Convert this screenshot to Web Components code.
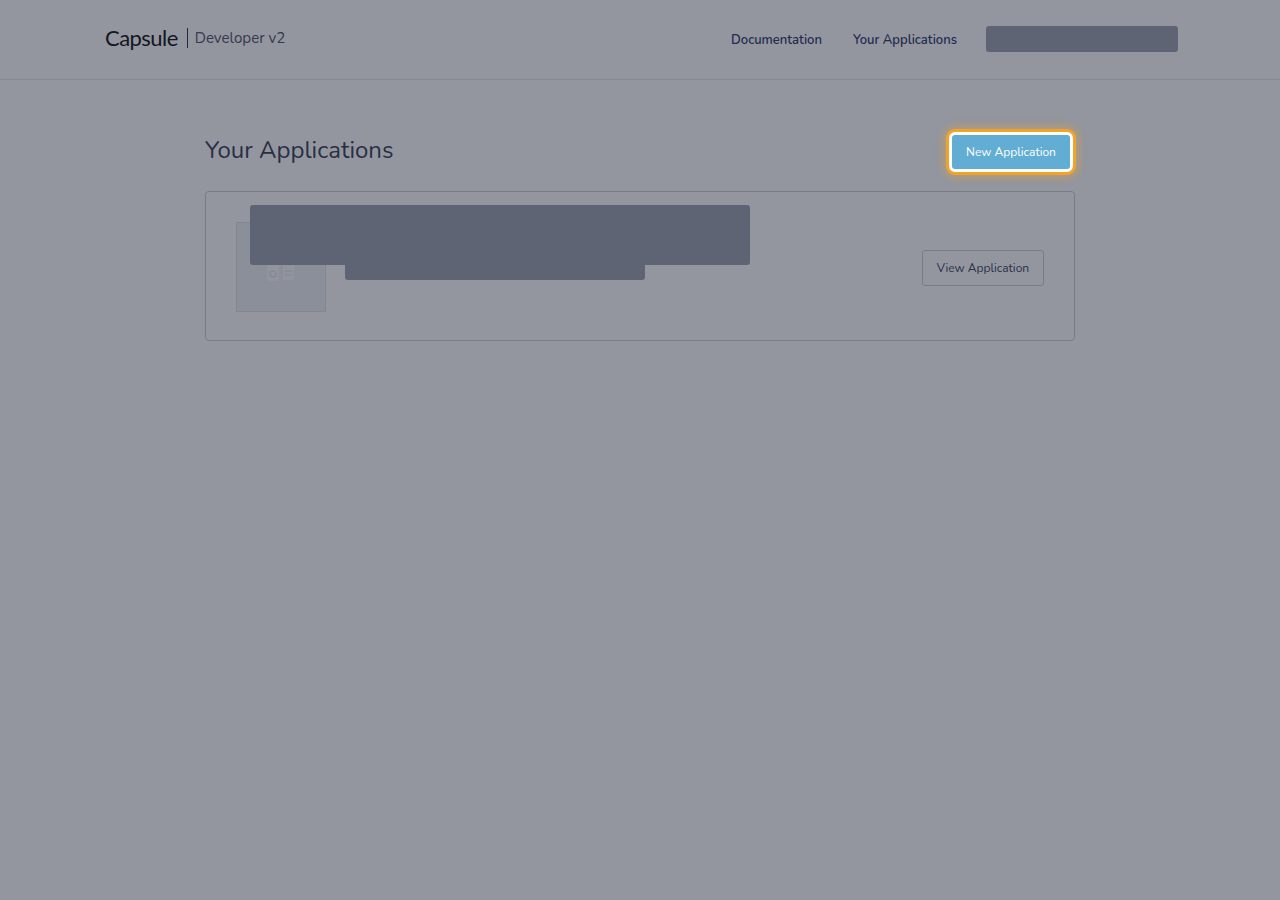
<!DOCTYPE html>
<html lang="en">
<head>
<meta charset="utf-8">
<title>Capsule Developer</title>
<style>
  html, body { margin: 0; height: 100%; }
  body {
    background: #fff;
    font-family: "Nunito", "Open Sans", "Noto Sans", sans-serif;
    color: #1f2a44;
    min-height: 900px;
    position: relative;
    overflow: hidden;
  }
  .overlay {
    position: absolute;
    inset: 0;
    background: rgba(39, 45, 63, 0.5);
    z-index: 5;
  }
</style>
</head>
<body>
<site-header></site-header>
<app-page></app-page>
<div class="overlay"></div>

<script>
class RedactBlock extends HTMLElement {
  constructor() {
    super();
    this.attachShadow({ mode: "open" });
    this.shadowRoot.innerHTML = `
      <style>
        :host {
          display: block;
          background: #5f6474;
          border-radius: 3px;
        }
      </style>
    `;
  }
}

class SiteHeader extends HTMLElement {
  constructor() {
    super();
    this.attachShadow({ mode: "open" });
    this.shadowRoot.innerHTML = `
      <style>
        :host {
          display: block;
          height: 79px;
          border-bottom: 1px solid #e2e4e8;
          box-sizing: content-box;
        }
        .inner {
          height: 79px;
          box-sizing: border-box;
          padding: 0 102px 3px 105px;
          display: flex;
          align-items: center;
          justify-content: space-between;
        }
        .brand {
          display: flex;
          align-items: center;
        }
        .logo {
          font-family: "Lato", sans-serif;
          font-size: 22px;
          letter-spacing: -0.55px;
          color: #000;
          line-height: 28px;
          margin-top: -1px;
        }
        .divider {
          width: 1px;
          height: 20px;
          background: #1c2233;
          margin: 0 7px 0 9px;
        }
        .product {
          font-size: 15.1px;
          color: #3e4560;
          margin-top: -1px;
        }
        nav {
          display: flex;
          align-items: center;
          font-size: 13px;
          font-weight: 600;
          color: #1b2a5c;
        }
        nav a { color: inherit; text-decoration: none; margin-right: 31px; margin-top: 3px; }
        nav a:nth-child(2) { margin-right: 29px; }
        nav redact-block { position: relative; z-index: 6; width: 192px; height: 26px; margin-top: 1px; }
      </style>
      <div class="inner">
        <div class="brand">
          <span class="logo">Capsule</span>
          <span class="divider"></span>
          <span class="product">Developer v2</span>
        </div>
        <nav>
          <a href="#">Documentation</a>
          <a href="#">Your Applications</a>
          <redact-block></redact-block>
        </nav>
      </div>
    `;
  }
}

class AppCard extends HTMLElement {
  constructor() {
    super();
    this.attachShadow({ mode: "open" });
    this.shadowRoot.innerHTML = `
      <style>
        :host {
          display: block;
          position: relative;
          border: 1px solid #c8cbd3;
          border-radius: 4px;
          box-sizing: border-box;
          height: 150px;
        }
        .row {
          height: 100%;
          box-sizing: border-box;
          padding: 2px 30px 0;
          display: flex;
          align-items: center;
          justify-content: space-between;
        }
        .thumb {
          width: 90px;
          height: 90px;
          box-sizing: border-box;
          background: #eef0f2;
          border: 1px solid #dfe1e5;
          display: flex;
          align-items: center;
          justify-content: center;
        }
        .view {
          font: inherit;
          font-size: 12px;
          color: #2c3350;
          background: transparent;
          border: 1px solid #c8cbd3;
          border-radius: 3px;
          width: 122px;
          height: 36px;
          padding: 0;
          margin-top: 2px;
        }
        .cover {
          position: absolute;
          z-index: 6;
        }
        .title { left: 44px; top: 13px; width: 500px; height: 60px; }
        .sub { left: 139px; top: 73px; width: 300px; height: 15px; border-radius: 0 0 3px 3px; }
      </style>
      <div class="row">
        <div class="thumb">
          <svg width="28" height="24" viewBox="0 0 28 24" fill="#fbfbfc" style="margin-top:4px">
            <path d="M1 0h10a1 1 0 0 1 1 1v20a3 3 0 0 1-3 3H3a3 3 0 0 1-3-3V1a1 1 0 0 1 1-1z"/>
            <circle cx="6" cy="17" r="3" fill="none" stroke="#e2e4e8" stroke-width="1.5"/>
            <path d="M17 6h9a1 1 0 0 1 1 1v15a1 1 0 0 1-1 1h-9a1 1 0 0 1-1-1V7a1 1 0 0 1 1-1z"/>
            <path d="M17.5 14h8M17.5 18h8" stroke="#dcdee3" stroke-width="1.2"/>
          </svg>
        </div>
        <button class="view">View Application</button>
      </div>
      <redact-block class="cover title"></redact-block>
      <redact-block class="cover sub"></redact-block>
    `;
  }
}

class AppPage extends HTMLElement {
  constructor() {
    super();
    this.attachShadow({ mode: "open" });
    this.shadowRoot.innerHTML = `
      <style>
        :host {
          display: block;
          width: 870px;
          margin: 0 auto;
          padding-top: 50px;
        }
        .top {
          display: flex;
          align-items: center;
          justify-content: space-between;
          height: 44px;
          margin-bottom: 17px;
        }
        h1 {
          margin: -4px 0 0;
          font-size: 24px;
          font-weight: 400;
          color: #2b3047;
        }
        .new {
          position: relative;
          z-index: 6;
          font: inherit;
          font-size: 12px;
          color: #fff;
          background: #62add4;
          border: 3px solid #fff;
          border-radius: 6px;
          width: 124px;
          height: 40px;
          margin: 0 2px 0 0;
          padding: 0;
          box-shadow: 0 0 0 3px #f2a32a, 0 0 8px 5px rgba(242, 163, 42, 0.45);
        }
      </style>
      <div class="top">
        <h1>Your Applications</h1>
        <button class="new">New Application</button>
      </div>
      <app-card></app-card>
    `;
  }
}

customElements.define("redact-block", RedactBlock);
customElements.define("site-header", SiteHeader);
customElements.define("app-card", AppCard);
customElements.define("app-page", AppPage);
</script>
</body>
</html>
